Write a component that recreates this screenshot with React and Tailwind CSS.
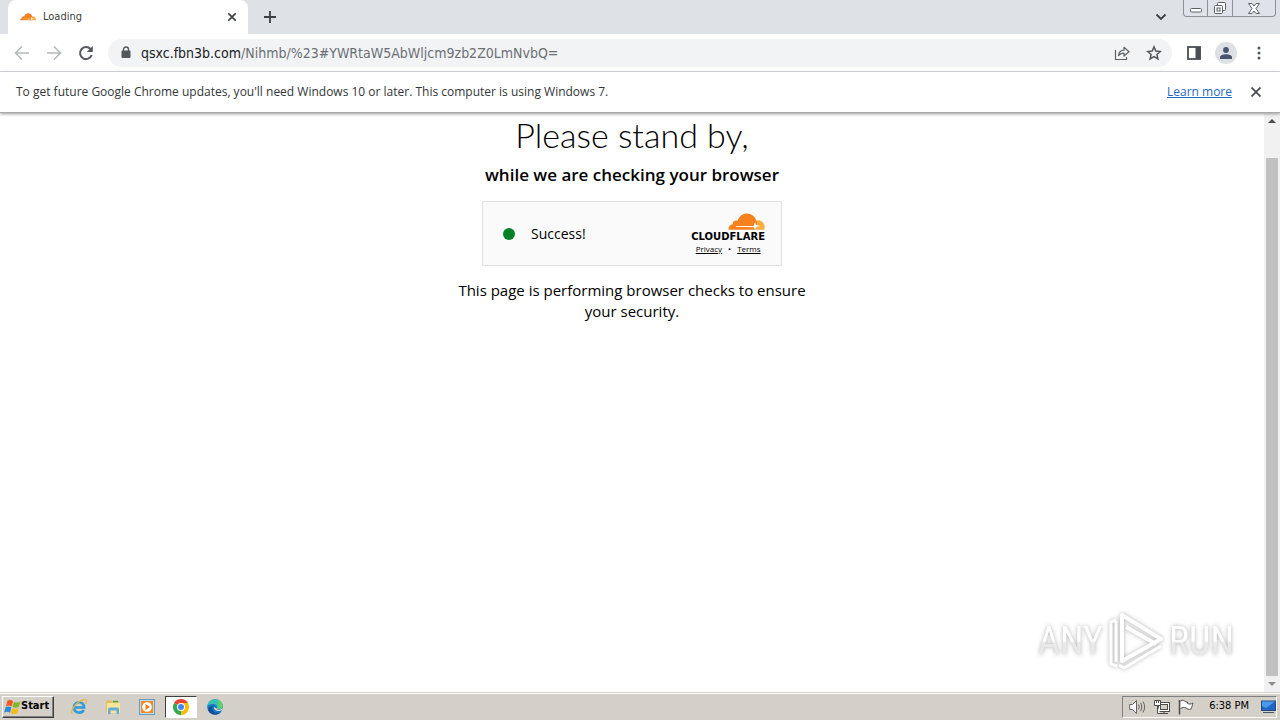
import React from 'react';

function CloudflareCloud({ className }) {
  return (
    <svg viewBox="0 0 37 18" className={className} aria-hidden="true">
      <path
        d="M29.500 7.200 C33.500 7 36.700 10 36.700 14 C36.700 15.200 36.500 16 36.300 16.700 H26 L28 10.500 Z"
        fill="#fbad41"
      />
      <path
        d="M0.500 16.700 C0.200 13.600 2 11.600 4.800 11.300 C4.300 8.700 7.200 6.600 9.600 8 C10.800 3.600 14.400 .6 18.800 .6 C23.500 .6 27 3.500 28.400 7.600 C30 9.500 28.800 12.500 27.300 16.700 Z"
        fill="#f6821f"
      />
      <path d="M8 12.900 L25.500 13.100 L27 9.200 L28.200 12 L32 13.300 L28.300 14.100 L27 16.700 L25.600 14.200 L8 13.700 Z" fill="#fff" />
    </svg>
  );
}

function ChromeLogo() {
  return (
    <svg viewBox="0 0 16 16" className="size-4" aria-hidden="true">
      <path d="M8 8 L1.070 4 A8 8 0 0 1 14.930 4 Z" fill="#ea4335" />
      <path d="M8 8 L14.930 4 A8 8 0 0 1 8 16 Z" fill="#fbbc04" />
      <path d="M8 8 L8 16 A8 8 0 0 1 1.070 4 Z" fill="#34a853" />
      <path d="M8 4 H14.930 L11.500 10 Z" fill="#fbbc04" />
      <path d="M1.070 4 L4.540 10 L8 8 Z" fill="#34a853" />
      <circle cx="8" cy="8" r="4" fill="#fff" />
      <circle cx="8" cy="8" r="3" fill="#4285f4" />
    </svg>
  );
}

function TabStrip() {
  return (
    <header className="flex h-[34px] shrink-0 bg-[#dee1e6] pl-2">
      <div className="flex w-60 items-center rounded-t-lg bg-white pl-3 pr-2 text-[#3c4043]">
        <CloudflareCloud className="mr-[7px] h-2 w-4" />
        <span className="flex-1 text-[11px]">Loading</span>
        <button aria-label="Close tab" className="flex size-4 items-center justify-center">
          <svg viewBox="0 0 8 8" className="size-2" stroke="#3c4043" strokeWidth="1.600">
            <path d="M.3 .3 L7.700 7.700 M7.700 .3 L.3 7.700" />
          </svg>
        </button>
      </div>
      <button aria-label="New tab" className="flex w-11 items-center justify-center">
        <svg viewBox="0 0 12 12" className="size-3" stroke="#3c4043" strokeWidth="1.800">
          <path d="M6 0 V12 M0 6 H12" />
        </svg>
      </button>
      <div className="flex-1" />
      <button aria-label="Search tabs" className="mr-4 flex w-3 items-center">
        <svg viewBox="0 0 12 8" className="h-2 w-3" fill="none" stroke="#3c4043" strokeWidth="1.800">
          <path d="M1.500 1.500 L6 6 L10.500 1.500" />
        </svg>
      </button>
      <div className="mr-1 flex h-[17px] divide-x divide-[#8b8f96] rounded-b border border-t-0 border-[#8b8f96] bg-[#dfe2e8]">
        <button aria-label="Minimize" className="flex w-6 items-center justify-center">
          <svg viewBox="0 0 12 12" className="size-3" fill="#fff" stroke="#5b6068">
            <rect x=".5" y="6.500" width="11" height="3.500" rx="1" />
          </svg>
        </button>
        <button aria-label="Restore" className="flex w-[25px] items-center justify-center">
          <svg viewBox="0 0 14 13" className="h-[13px] w-[14px]" fill="#fff" stroke="#5b6068">
            <rect x="4.500" y=".5" width="8" height="8" rx="1" />
            <rect x="1.500" y="3.500" width="8" height="8" rx="1" />
            <rect x="4" y="6" width="3" height="3" />
          </svg>
        </button>
        <button aria-label="Close" className="flex w-[42px] items-center justify-center">
          <svg viewBox="0 0 12 11" className="h-[11px] w-3" fill="#fff" stroke="#5b6068">
            <path d="M.5 .5 H4 L6 3 L8 .5 H11.500 L8 5.500 L11.500 10.500 H8 L6 8 L4 10.500 H.5 L4 5.500 Z" />
          </svg>
        </button>
      </div>
    </header>
  );
}

function Toolbar() {
  return (
    <nav className="flex h-[38px] shrink-0 items-center border-b border-[#d5d7da] bg-white pl-[14px] pr-[13px]">
      <button aria-label="Back" className="mr-4">
        <svg viewBox="0 0 16 16" className="size-4" fill="none" stroke="#b6b8bb" strokeWidth="1.600">
          <path d="M15 8 H2 M8 1.500 L1.500 8 L8 14.500" />
        </svg>
      </button>
      <button aria-label="Forward" className="mr-4">
        <svg viewBox="0 0 16 16" className="size-4" fill="none" stroke="#b6b8bb" strokeWidth="1.600">
          <path d="M1 8 H14 M8 1.500 L14.500 8 L8 14.500" />
        </svg>
      </button>
      <button aria-label="Reload" className="mr-[14px]">
        <svg viewBox="0 0 16 16" className="size-4" fill="none" stroke="#54585d" strokeWidth="2">
          <path d="M13.700 10 A6 6 0 1 1 12.500 4" />
          <path d="M14.800 1 V7 H8.800 Z" fill="#54585d" stroke="none" />
        </svg>
      </button>
      <div className="flex h-7 flex-1 items-center rounded-full bg-[#f1f3f4] pl-[13px] pr-2">
        <svg viewBox="0 0 10 13" className="mr-[10px] h-[13px] w-[10px]" aria-hidden="true">
          <path d="M2.500 5 V3.500 A2.500 2.500 0 0 1 7.500 3.500 V5" fill="none" stroke="#54585d" strokeWidth="1.400" />
          <rect x=".5" y="4.500" width="9" height="7.500" rx="1" fill="#54585d" />
        </svg>
        <a href="#page" className="flex-1 text-sm text-[#6b6f74]">
          <span className="text-[#202124]">qsxc.fbn3b.com</span>/Nihmb/%23#YWRtaW5AbWljcm9zb2Z0LmNvbQ=
        </a>
        <button aria-label="Share this page" className="mr-4">
          <svg viewBox="0 0 16 16" className="size-4" fill="none" stroke="#5f6368" strokeWidth="1.200">
            <path d="M1.500 5 V14.500 H12.500 V12" />
            <path d="M4.500 10.500 C5 7 7 5.300 10 5.200 V2.300 L15 6.700 L10 11 V8.200 C7.500 8.200 6 9 4.500 10.500 Z" strokeLinejoin="round" />
          </svg>
        </button>
        <button aria-label="Bookmark this tab" className="mr-0.5">
          <svg viewBox="0 0 16 16" className="size-4" fill="none" stroke="#54585d" strokeWidth="1.500">
            <path d="M8 1.900 L9.800 6.100 L14.300 6.500 L10.900 9.500 L11.900 13.900 L8 11.600 L4.100 13.900 L5.100 9.500 L1.700 6.500 L6.200 6.100 Z" />
          </svg>
        </button>
      </div>
      <button aria-label="Side panel" className="ml-[15px] mr-[14px]">
        <svg viewBox="0 0 14 14" className="size-[14px]">
          <rect x="1" y="1" width="12" height="12" fill="#fff" stroke="#4a4e53" strokeWidth="1.800" />
          <rect x="8.500" y="1" width="5" height="12" fill="#4a4e53" />
        </svg>
      </button>
      <button aria-label="Profile" className="mr-[14px] flex size-[22px] items-center justify-center rounded-full bg-[#dde0e5]">
        <svg viewBox="0 0 12 12" className="size-3" fill="#485470">
          <circle cx="6" cy="3" r="2.900" />
          <path d="M0 12 V10.200 C0 6.200 12 6.200 12 10.200 V12 Z" />
        </svg>
      </button>
      <button aria-label="Menu" className="flex w-4 justify-center">
        <svg viewBox="0 0 4 14" className="h-[14px] w-1" fill="#54585d">
          <circle cx="2" cy="2" r="1.500" />
          <circle cx="2" cy="7" r="1.500" />
          <circle cx="2" cy="12" r="1.500" />
        </svg>
      </button>
    </nav>
  );
}

function InfoBar() {
  return (
    <div className="z-10 flex h-[41px] shrink-0 items-center border-b border-[#a9a9a9] bg-white px-4 font-['Open_Sans',sans-serif] text-xs text-[#333639] shadow-[0_1px_3px_#999]">
      <p className="flex-1">
        To get future Google Chrome updates, you'll need Windows 10 or later. This computer is using Windows 7.
      </p>
      <a href="#learn" className="mr-4 text-[#1f69c0] underline">
        Learn more
      </a>
      <button aria-label="Dismiss" className="flex size-4 items-center justify-center">
        <svg viewBox="0 0 10 10" className="size-[10px]" stroke="#4a4e53" strokeWidth="1.800">
          <path d="M.5 .5 L9.500 9.500 M9.500 .5 L.5 9.500" />
        </svg>
      </button>
    </div>
  );
}

function Watermark() {
  return (
    <div
      className="absolute bottom-5 right-[46px] flex items-center gap-1 font-['Liberation_Sans_Narrow','Roboto_Condensed',sans-serif] text-[38px] leading-none text-white [filter:drop-shadow(0_0_2px_#b0b0b0)]"
    >
      <span className="bg-linear-to-b from-white from-50% to-[#e9e9e9] to-55% bg-clip-text text-transparent">ANY</span>
      <svg viewBox="0 0 58 62" className="h-[62px] w-[58px]" fill="none" stroke="#fff" strokeWidth="4" aria-hidden="true">
        <path d="M15 5 L54 29 L15 51 Z" strokeLinejoin="round" />
        <path d="M19 17 L49 34" />
        <path d="M9 10 L4 12 V54 L10 56 M9 11 V52" strokeWidth="3" />
        <path d="M54 36 L17 58 L12 55" strokeWidth="3" />
      </svg>
      <span className="bg-linear-to-b from-white from-50% to-[#e9e9e9] to-55% bg-clip-text text-transparent">RUN</span>
    </div>
  );
}

function Page() {
  return (
    <main id="page" className="relative flex flex-1 bg-white font-['Open_Sans','Noto_Sans',sans-serif] text-black">
      <div className="flex flex-1 flex-col items-center">
        <h1 className="font-['Lato','Open_Sans',sans-serif] text-[34px] font-light leading-[44px]">Please stand by,</h1>
        <h2 className="mt-1 text-[17px] font-semibold leading-7">while we are checking your browser</h2>
        <section className="mt-3 flex h-[65px] w-[300px] items-center border border-[#e0e0e0] bg-[#fafafa] pl-5 pr-4">
          <span className="mr-4 size-3 rounded-full bg-[#038127]" />
          <span className="flex-1 text-sm">Success!</span>
          <div className="flex flex-col items-end">
            <CloudflareCloud className="h-[18px] w-[37px]" />
            <span className="font-['DejaVu_Sans',sans-serif] text-[10px] font-bold leading-3">
              CLOUDFLARE
            </span>
            <div className="flex items-center gap-[6px] self-center text-[8px] leading-3">
              <a href="#privacy" className="underline">Privacy</a>
              <span>•</span>
              <a href="#terms" className="underline">Terms</a>
            </div>
          </div>
        </section>
        <p className="mt-[14px] max-w-[350px] text-center text-[15px] leading-[21px]">
          This page is performing browser checks to ensure your security.
        </p>
      </div>
      <div className="flex w-4 flex-col items-center bg-[#f1f1f1] py-[6px]" aria-hidden="true">
        <svg viewBox="0 0 8 4" className="h-1 w-2 shrink-0" fill="#4d4d4d">
          <path d="M0 4 L4 0 L8 4 Z" />
        </svg>
        <div className="mt-[35px] mb-[6px] w-3 flex-1 bg-[#c1c1c1]" />
        <svg viewBox="0 0 8 4" className="h-1 w-2 shrink-0" fill="#8c8c8c">
          <path d="M0 0 L4 4 L8 0 Z" />
        </svg>
      </div>
      <Watermark />
    </main>
  );
}

function Taskbar() {
  return (
    <footer className="flex h-7 shrink-0 items-center border-t border-[#d4d0c8] bg-[#d4d0c8] pl-0.5 pr-[3px] shadow-[inset_0_1px_0_#fff]">
      <button className="mr-[9px] flex h-[22px] w-[52px] items-center border border-b-[#404040] border-l-white border-r-[#404040] border-t-white pl-px text-[11px] font-bold text-black shadow-[inset_-1px_-1px_0_#808080]">
        <svg viewBox="0 0 15 15" className="size-[17px] shrink-0" aria-hidden="true">
          <path d="M3 2.500 Q5.500 1 8 2.800 L6.800 7.500 Q4.500 6 1.800 7.200 Z" fill="#ef5a24" />
          <path d="M8.800 3.200 Q11.500 4.800 14.500 3 L13.200 7.800 Q10.500 9.400 7.600 7.900 Z" fill="#80b82a" />
          <path d="M1.500 8 Q4 6.900 6.500 8.400 L5.300 13 Q2.800 11.500 .2 12.800 Z" fill="#2b8bd8" />
          <path d="M7.300 8.800 Q10 10.300 12.900 8.800 L11.600 13.500 Q9 15 6.100 13.400 Z" fill="#fbb916" />
        </svg>
        Start
      </button>
      <div className="flex items-center">
        <button aria-label="Internet Explorer" className="flex w-[34px] justify-center pr-0.5">
          <svg viewBox="0 0 18 18" className="size-[18px]" fill="none">
            <path d="M4 9.500 H14 C14 2.500 4 2.500 4 9.500 C4 15.500 12 16 13.700 12" stroke="#2f9bdc" strokeWidth="2.600" />
            <path d="M2.500 16 C-1 14 6 3.500 14 1.700 C17 1.200 17 4 15.500 6" stroke="#e7b53a" strokeWidth="1.300" />
          </svg>
        </button>
        <button aria-label="Windows Explorer" className="flex w-[34px] justify-center pr-0.5">
          <svg viewBox="0 0 16 16" className="size-4">
            <path d="M1 3 L2 1.500 H7 L8 3 H14 V13 H1 Z" fill="#e3be5b" />
            <path d="M2 4 H15 V14 H2 Z" fill="#f8e49a" />
            <path d="M3 15 V10 Q3 8.500 5 8.500 H12 Q14 8.500 14 10 V15 H11.500 V11.500 H5.500 V15 Z" fill="#62acd6" />
            <path d="M8 2.500 H13" stroke="#4ca94c" strokeWidth="1.500" />
          </svg>
        </button>
        <button aria-label="Windows Media Player" className="flex w-[34px] justify-center pr-0.5">
          <svg viewBox="0 0 16 16" className="size-4">
            <rect x=".5" y=".5" width="15" height="15" fill="#bcdcf1" stroke="#649cc3" />
            <rect x="2" y="2" width="12" height="12" fill="#f58b1f" />
            <circle cx="8" cy="8" r="4.800" fill="#fff" />
            <path d="M6.500 5 L11 8 L6.500 11 Z" fill="#ef7918" />
          </svg>
        </button>
        <button
          aria-label="Google Chrome"
          className="flex h-[22px] w-8 items-center justify-center border border-b-white border-l-[#404040] border-r-white border-t-[#404040] bg-white"
        >
          <ChromeLogo />
        </button>
        <button aria-label="Microsoft Edge" className="flex w-9 justify-center">
          <svg viewBox="0 0 16 16" className="size-4">
            <circle cx="8" cy="8" r="7.800" fill="#1679c8" />
            <path d="M.4 7 C1.500 -2 15.500 -2 15.800 7 C15.800 10.500 11 11 9.500 9.500 C11 7.500 9 5 6 5 C3.500 5 1.200 5.800 .4 7 Z" fill="#35c1b5" />
            <path d="M10 .5 C14 1.500 16 4.500 15.700 7.500 C15.300 10 11.500 10.700 9.700 9.600 C12 7 12 3 10 .5 Z" fill="#62cf68" />
            <path d="M6 7.500 C4 10.500 7 15 13.500 13.500 C10 17 2 16 1 10 C2 8 4 7 6 7.500 Z" fill="#164f96" />
            <path d="M7 8 C6.500 11 10 13 14.500 11.500 L15.600 10.500 L16 9 C13 11.500 9.500 11 9.500 9.300 Z" fill="#d4d0c8" />
          </svg>
        </button>
      </div>
      <div className="flex-1" />
      <div className="flex h-[22px] items-center border border-b-white border-l-[#808080] border-r-white border-t-[#808080] pl-[6px] text-[11px] text-black">
        <svg viewBox="0 0 17 16" className="mr-2 h-4 w-[17px]" fill="none" stroke="#66645f" aria-label="Volume" role="img">
          <path d="M.7 5.500 H3.500 L7.500 1.500 V14.500 L3.500 10.500 H.7 Z" fill="#fff" />
          <path d="M9.500 5.500 Q11 8 9.500 10.500 M11.700 3.800 Q14.200 8 11.700 12.200 M14 2.500 Q17.300 8 14 13.500" />
        </svg>
        <svg viewBox="0 0 16 16" className="mr-2 size-4" fill="#fff" stroke="#4f4d49" aria-label="Network" role="img">
          <rect x="4.500" y="3.500" width="11" height="9" />
          <rect x="6.500" y="5.500" width="7" height="5" fill="#d4d0c8" />
          <path d="M6 14.500 H14 M10 12.500 V14.500" />
          <path d="M.5 1.500 H6.500 V6.500 H.5 Z M2.500 1.500 V4 M4.500 1.500 V4 M3.500 6.500 V14.500 H6" />
        </svg>
        <svg viewBox="0 0 16 16" className="mr-[15px] size-4" fill="#fff" stroke="#4f4d49" aria-label="Action Center" role="img">
          <path d="M2.500 2 C5 .5 6.500 2 8 3 H9.500 V4.500 C11.500 5.500 13 5 15 4 C14 6.500 14 8 13 10 C11 11 9.500 10 8 9 C6 8 4.500 8.500 2.500 9.500" />
          <path d="M1.500 1 V15.500" strokeWidth="1.500" />
        </svg>
        <time className="mr-3">6:38 PM</time>
        <svg viewBox="0 0 15 14" className="h-[14px] w-[15px]" aria-label="Show desktop" role="img">
          <rect x=".5" y="1" width="14" height="9.500" fill="#2266c4" stroke="#254a81" />
          <path d="M1 1.500 H14 L5 8 L1 6 Z" fill="#4a9be8" />
          <path d="M2 12 H13 V13 H2 Z" fill="#46566b" />
        </svg>
      </div>
    </footer>
  );
}

export default function App() {
  return (
    <div className="flex min-h-screen flex-col overflow-hidden bg-white font-['DejaVu_Sans_Condensed','Open_Sans',sans-serif]">
      <TabStrip />
      <Toolbar />
      <InfoBar />
      <Page />
      <Taskbar />
    </div>
  );
}
